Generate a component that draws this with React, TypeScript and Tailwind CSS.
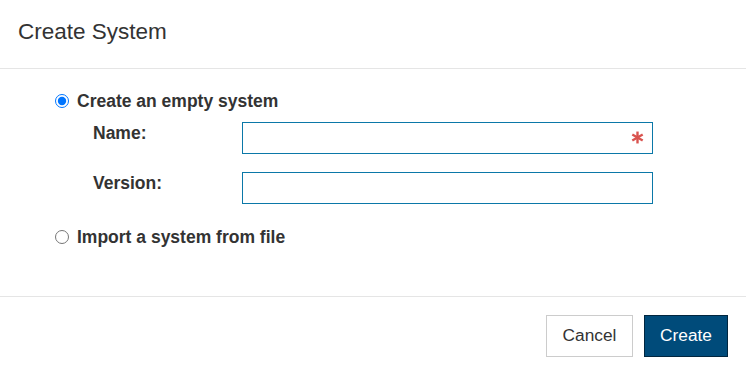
import { useState } from "react";

type Mode = "empty" | "import";

function RequiredMark() {
  return (
    <svg
      viewBox="0 0 12 12"
      className="pointer-events-none absolute right-[9px] top-[9px] h-[13px] w-[13px]"
    >
      <g stroke="#d9534f" strokeWidth="2.2" strokeLinecap="butt">
        <line x1="6" y1="0.5" x2="6" y2="11.5" />
        <line x1="1.2" y1="3.2" x2="10.8" y2="8.8" />
        <line x1="1.2" y1="8.8" x2="10.8" y2="3.2" />
      </g>
    </svg>
  );
}

function Field({
  label,
  required,
  className,
}: {
  label: string;
  required?: boolean;
  className?: string;
}) {
  return (
    <div className={`flex items-start ${className ?? ""}`}>
      <label className="mt-[1px] w-[149px] shrink-0 text-[17.5px] font-bold leading-[20px]">
        {label}
      </label>
      <div className="relative">
        <input
          type="text"
          className="block h-[32px] w-[411px] border border-[#0b78a8] bg-white px-2 text-[16px] outline-none"
        />
        {required && <RequiredMark />}
      </div>
    </div>
  );
}

export default function App() {
  const [mode, setMode] = useState<Mode>("empty");

  return (
    <div className="h-[375px] w-[746px] bg-white font-['Liberation_Sans',Arial,sans-serif] text-[#333]">
      <div className="flex h-[69px] items-center border-b border-[#e5e5e5] px-[18px] pb-[4px]">
        <h1 className="text-[22.5px] font-normal">Create System</h1>
      </div>

      <div className="h-[227px] pl-[55px] pt-[22px]">
        <label className="flex h-[20px] items-center">
          <input
            type="radio"
            name="mode"
            checked={mode === "empty"}
            onChange={() => setMode("empty")}
            className="h-[14px] w-[14px]"
          />
          <span className="ml-[8px] text-[17.5px] font-bold leading-[20px]">
            Create an empty system
          </span>
        </label>

        <div className="pl-[38px]">
          <Field label="Name:" required className="mt-[11px]" />
          <Field label="Version:" className="mt-[18px]" />
        </div>

        <label className="mt-[23px] flex h-[20px] items-center">
          <input
            type="radio"
            name="mode"
            checked={mode === "import"}
            onChange={() => setMode("import")}
            className="h-[14px] w-[14px]"
          />
          <span className="ml-[8px] text-[17.5px] font-bold leading-[20px]">
            Import a system from file
          </span>
        </label>
      </div>

      <div className="flex justify-end gap-[11px] border-t border-[#e5e5e5] pr-[18px] pt-[18px]">
        <button
          type="button"
          className="h-[42px] w-[87px] border border-[#cccccc] bg-white text-[17.3px] text-[#333]"
        >
          Cancel
        </button>
        <button
          type="button"
          className="h-[42px] w-[84px] border border-[#01263f] bg-[#004b7a] text-[17.3px] text-white"
        >
          Create
        </button>
      </div>
    </div>
  );
}
